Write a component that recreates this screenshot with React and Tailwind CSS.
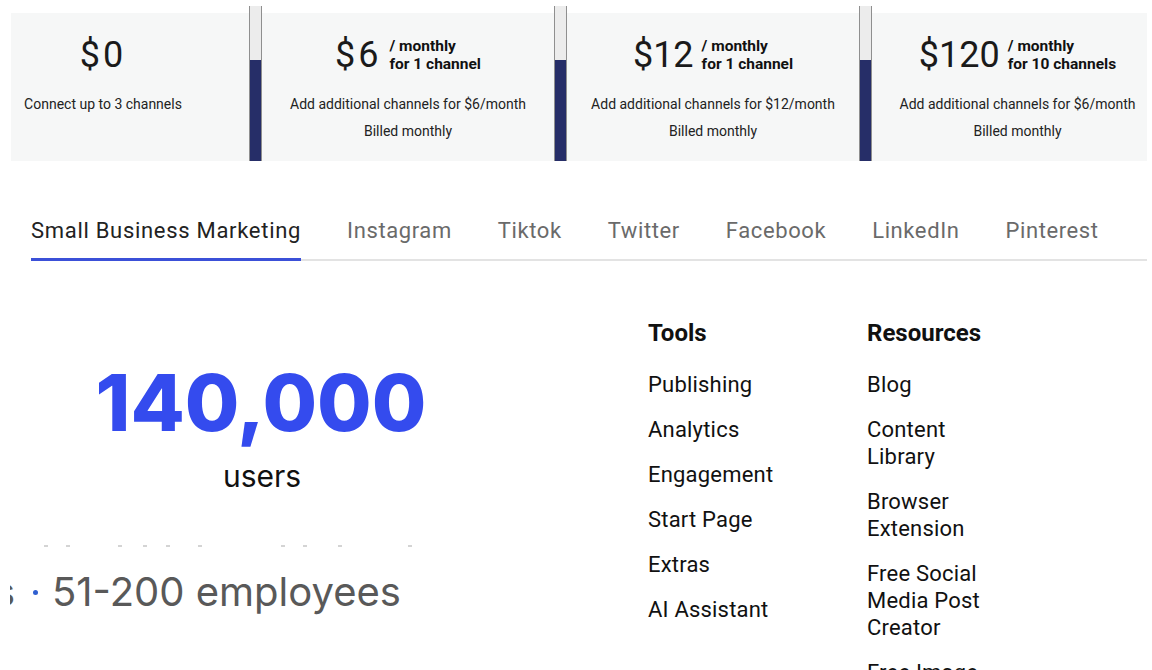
import React from "react";

const plans = [
  { price: "$0", wide: true, box: "w-[238px] pr-[54px]", lines: ["Connect up to 3 channels"] },
  {
    price: "$6",
    wide: true,
    per: ["/ monthly", "for 1 channel"],
    box: "w-[292px]",
    lines: ["Add additional channels for $6/month", "Billed monthly"],
  },
  {
    price: "$12",
    per: ["/ monthly", "for 1 channel"],
    box: "w-[292px]",
    lines: ["Add additional channels for $12/month", "Billed monthly"],
  },
  {
    price: "$120",
    per: ["/ monthly", "for 10 channels"],
    box: "w-[275px] pl-[16px]",
    lines: ["Add additional channels for $6/month", "Billed monthly"],
  },
];

const tabs = ["Small Business Marketing", "Instagram", "Tiktok", "Twitter", "Facebook", "LinkedIn", "Pinterest"];

const tools = ["Publishing", "Analytics", "Engagement", "Start Page", "Extras", "AI Assistant"];
const resources = ["Blog", "Content Library", "Browser Extension", "Free Social Media Post Creator", "Free Image Generator"];

const faint = [48, 22, 52, 25, 23, 32, 83, 22, 35, 70];

const Separator = () => (
  <div className="w-[13px] h-[155px] flex flex-col border-x border-[#8f8f8f]">
    <div className="h-[54px] bg-[#ececec]"></div>
    <div className="flex-1 bg-[#262e68]"></div>
  </div>
);

const PlanCard = ({ plan }) => (
  <div className={`${plan.box} mt-[7px] h-[148px] bg-[#f6f7f7] flex flex-col items-center text-[#1a1a1a]`}>
    <div className="pt-[22px] h-[62px] flex items-center">
      <span className={`text-[36px] leading-[40px] ${plan.wide ? "tracking-[3px]" : ""}`}>{plan.price}</span>
      {plan.per && (
        <div className="ml-[8px] flex flex-col font-bold text-[15.5px] leading-[18px] text-[#111]">
          {plan.per.map((p) => (
            <span key={p}>{p}</span>
          ))}
        </div>
      )}
    </div>
    <div className="mt-[19px] flex flex-col items-center gap-[7px] text-[14px] leading-[20px] text-[#222]">
      {plan.lines.map((l) => (
        <span key={l}>{l}</span>
      ))}
    </div>
  </div>
);

const App = () => {
  return (
    <div className="w-[1152px] h-[670px] overflow-hidden bg-white font-['Roboto',sans-serif]">
      {/* pricing strip */}
      <div className="flex pt-[6px] pl-[11px]">
        {plans.map((plan, i) => (
          <React.Fragment key={plan.price}>
            {i > 0 && <Separator />}
            <PlanCard plan={plan} />
          </React.Fragment>
        ))}
      </div>

      {/* tabs */}
      <div className="mt-[57px] ml-[31px] mr-[5px] flex gap-[46px] border-b-2 border-[#e3e3e3]">
        {tabs.map((t, i) => (
          <div
            key={t}
            className={
              i === 0
                ? "pb-[14px] -mb-[2px] border-b-[3px] border-[#3b50d8] text-[22px] leading-[26px] tracking-[0.7px] text-[#222]"
                : "pb-[15px] text-[22px] leading-[26px] tracking-[0.6px] text-[#6a6a6a]"
            }
          >
            {t}
          </div>
        ))}
      </div>

      {/* lower section */}
      <div className="flex">
        <div className="w-[648px] font-['Inter',sans-serif]">
          <div className="mt-[102px] w-[522px] text-center text-[79px] leading-none font-extrabold text-[#344bee]">
            140,000
          </div>
          <div className="mt-[19px] w-[524px] text-center text-[30px] leading-none text-[#111]">
            users
          </div>
          <div className="mt-[54px] flex h-[2px]">
            {faint.map((x, i) => (
              <span key={i} className="h-[2px] w-[4px] bg-[#d4d4d4]" style={{ marginLeft: x - 4 }}></span>
            ))}
          </div>
          <div className="mt-[25px] ml-[10px] flex items-center text-[40px] leading-none text-[#595959]">
            <div className="w-[5px] overflow-hidden flex justify-end">
              <span>s</span>
            </div>
            <span className="ml-[18px] w-[5px] h-[5px] rounded-full bg-[#2f5fd0]"></span>
            <span className="ml-[14px]">51-200 employees</span>
          </div>
        </div>

        <div className="mt-[58px] flex text-[#111]">
          <div className="w-[219px]">
            <div className="text-[24px] leading-[29px] font-bold">Tools</div>
            <div className="mt-[23px] flex flex-col gap-[18px] text-[22px] leading-[27px] tracking-[0.2px]">
              {tools.map((t) => (
                <span key={t}>{t}</span>
              ))}
            </div>
          </div>
          <div className="w-[122px]">
            <div className="text-[24px] leading-[29px] font-bold">Resources</div>
            <div className="mt-[23px] flex flex-col gap-[18px] text-[22px] leading-[27px] tracking-[0.2px]">
              {resources.map((t) => (
                <span key={t}>{t}</span>
              ))}
            </div>
          </div>
        </div>
      </div>
    </div>
  );
};

export default App;
